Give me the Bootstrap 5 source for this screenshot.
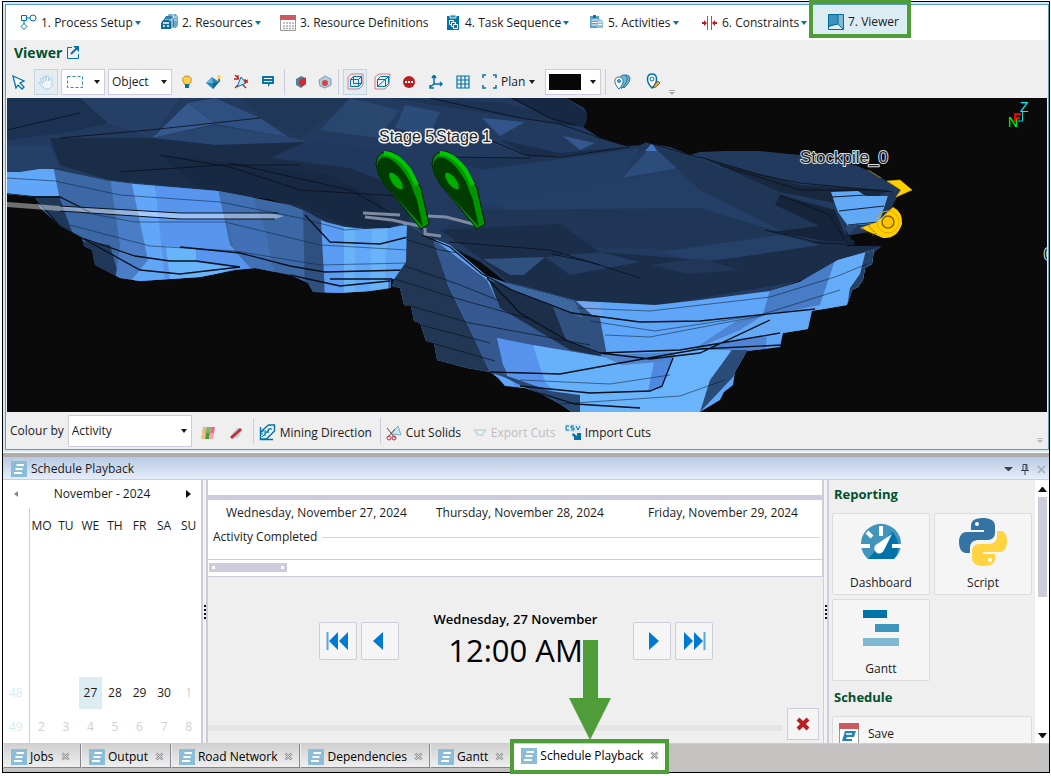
<!DOCTYPE html>
<html lang="en">
<head>
<meta charset="utf-8">
<meta name="viewport" content="width=device-width, initial-scale=1">
<title>Viewer</title>
<link href="https://cdn.jsdelivr.net/npm/bootstrap@5.3.0/dist/css/bootstrap.min.css" rel="stylesheet">
<style>
:root{--line:#cccddc;--blue:#0073a8;--green:#4f9d38;--panel:#efefef}
body{font-family:"Open Sans","Noto Sans",sans-serif;font-size:12px;line-height:16px;color:#1b1b1b;background:#fff}
button,select{font:inherit;color:inherit}
.window{height:100vh;padding:1px 1px 3px 2px}
.frame{border:1px solid #000}
.frame,.viewer-shell,.viewer-pane{min-height:0}
.viewer-shell{border:solid #d5e9f5;border-width:2px 0 2px 2px}
.viewer-pane{border:1px solid #5a9ec0;background:var(--panel)}
.steps{display:grid;grid-template-columns:141px 119px 166px 144px 112px 107px 102px;height:35px;background:#fff;padding-left:14px}
.plain{border:0;background:none;padding:0;display:flex;align-items:center}
.step{gap:4px;white-space:nowrap}
.step .caret{margin-left:-2px}
.step svg{flex:none}
.step.current{background:#dcecf3;padding-left:19px;position:relative;height:33px}
.step.current::after{content:"";position:absolute;inset:-5px 0 0 0;border:4px solid var(--green)}
.caret{width:0;height:0;border:3px solid transparent;border-top:4px solid var(--blue);border-bottom:0;flex:none}
.caret.dark{border-top-color:#1b1b1b}
.pane-title{font-size:14px;font-weight:700;color:#00502d}
.tools{height:33px;padding:0 4px 0 1px;gap:3px}
.tool{width:24px;height:26px;justify-content:center;flex:none}
.tool.pressed{border:1px solid #c6d4e0;background:#e3edf1}
.vsep{width:1px;height:26px;background:var(--line);flex:none;margin:0 1px}
.boxed{border:1px solid var(--line);background:#fff;border-radius:0;height:26px}
.pick{appearance:none;padding:0 20px 0 3px;background:#fff url("data:image/svg+xml,%3Csvg xmlns='http://www.w3.org/2000/svg' width='6' height='4'%3E%3Cpath d='M0 0h6L3 4z' fill='%231b1b1b'/%3E%3C/svg%3E") no-repeat right 4px center}
.scene{flex:1 1 0;min-height:0;background:#0a0a0a;margin:0 1px}
.scene svg{display:block;width:100%;height:100%}
.bottombar{height:37px;padding:0 4px;gap:4px}
.bottombar>button{padding-top:4px}
.splitline{height:5px;background:#acacac;border-top:1px solid #fff}
.dock{height:315px}
.dock-head{height:23px;padding:2px 3px 0 8px;gap:4px;background:linear-gradient(#b7c9e2,#e6eefb);border-bottom:1px solid var(--line)}
.dock-body{flex:1 1 0;min-height:0;border-bottom:1px solid var(--line)}
.calendar-pane{width:199px;background:#fff;border-right:1px solid var(--line)}
.cal-head{height:28px;padding:0 10px}
.cal{width:100%;table-layout:fixed;text-align:center}
.cal th,.cal td{padding:0;height:34px;font-weight:400;vertical-align:middle}
.cal thead th{height:36px}
.cal tbody .blank th,.cal tbody .blank td{height:33px}
.cal th:first-child{width:26px;border-right:1px solid var(--line);color:#d6ecf4}
.cal .other{color:#cfcfd3}
.cal .today span{display:block;background:#dcecf3;padding:8px 0;margin:0 1px}
.grip{width:6px;border:1px solid var(--line);border-width:0 2px 0 1px;background:#f3f3f3;flex:none}
.grip i{display:block;width:2px;height:2px;background:#111;margin:1px 0}
.play-pane{background:var(--panel);min-width:0}
.timeline{background:#fff;border-right:1px solid var(--line);border-bottom:1px solid var(--line)}
.timeline-top{height:20px;border-bottom:5px solid var(--line)}
.dates{display:grid;grid-template-columns:210px 212px 1fr;height:26px;padding-left:18px}
.group-row{height:34px;border-bottom:1px solid var(--line);padding:3px 2px 0 5px;gap:5px}
.group-row hr{margin:8px 0 0;border-color:#d5d5da;opacity:1}
.hscroll{height:16px;padding:3px 0 0 1px}
.hthumb{width:78px;height:9px;background:var(--line);padding:0 3px}
.hthumb i{width:3px;height:3px;background:#fff}
.play{width:38px;height:38px;border:1px solid var(--line);background:#f5f5f5;border-radius:2px;justify-content:center}
.player{padding-top:33px}
.clock{width:226px;text-align:center;color:#000}
.clock-day{font-size:13px;font-weight:600;line-height:18px}
.clock-time{font-size:31px;font-weight:500;line-height:44px}
.track{height:6px;background:#e5e5e5;margin-top:8px}
.side{width:206px;background:var(--panel);padding:5px 3px 0 3px;overflow:hidden}
.side h2{font-size:13px;font-weight:700;line-height:18px;color:#00502d;margin:0 0 0 2px}
.tiles{display:grid;grid-template-columns:1fr 1fr;gap:4px;margin:10px 0 7px}
.tile{height:82px;border:1px solid #dcdcdf;background:#f5f5f5;border-radius:2px;flex-direction:column;justify-content:space-between;padding:4px 0 3px}
.savebtn{width:100%;height:36px;border:1px solid #dcdcdf;background:#f5f5f5;border-radius:2px;margin-top:10px;padding:0 6px;gap:9px}
.vscroll{width:14px;background:#fff;padding:7px 0 5px}
.vthumb{width:9px;height:100px;background:var(--line);margin-top:5px}
.tabs{height:28px;background:#c3c2c0}
.tab{height:24px;min-width:78px;padding:2px 6px 0 7px;gap:3px;background:linear-gradient(#d0d0d0,#efefef);border-right:1px solid #84858f;border-bottom:1px solid #84858f;border-left:1px solid #eee;position:relative;white-space:nowrap;color:#000}
.tab.current{background:#fff;border:0;padding:0 10px 4px;height:27px}
.tab.current::after{content:"";position:absolute;inset:-5px 0 -3px -1px;border:4px solid var(--green)}
.pointer{position:absolute;left:58px;bottom:31px;width:42px;height:100px;z-index:2}
</style>
</head>
<body>
<svg width="0" height="0" class="position-absolute" aria-hidden="true">
  <defs>
    <symbol id="doc" viewBox="0 0 16 16"><path fill="#8bbdd6" d="M0 0h16v16H0z"/><path d="M5.500 4h7.500M4.500 8h7M3 12h8" stroke="#fff" stroke-width="2"/></symbol>
    <symbol id="shut" viewBox="0 0 10 10"><path d="M1.500 1.500l7 7M8.500 1.500l-7 7" stroke="#999" stroke-width="3"/><path d="M1.500 1.500l7 7M8.500 1.500l-7 7" stroke="#ddd"/></symbol>
  </defs>
</svg>
<div class="window d-flex flex-column">
<div class="frame d-flex flex-column flex-grow-1">

<section class="viewer-shell d-flex flex-column flex-grow-1">
<div class="viewer-pane d-flex flex-column flex-grow-1">
  <nav class="steps" aria-label="Workflow">
    <button class="plain step"><svg width="17" height="17" fill="none" stroke="#0073a8"><path d="M1.500 1.500h5v5h-5zM7 4h3M4 7v3M4 9.500l3 3-3 3-3-3z"/><circle cx="13" cy="4" r="3"/></svg>1. Process Setup<span class="caret"></span></button>
    <button class="plain step"><svg width="17" height="17"><path d="M6 3l2-3h7l2 3v8l-2 3H6z" fill="#6ba9c9"/><path d="M7 3h9M8 6h8M12 0v14" stroke="#dcecf3"/><path d="M3 5l2-3h6l2 4v7H3z" fill="#3181aa"/><path d="M4 6h7M11 4v9" stroke="#dcecf3"/><path d="M0 9l2-3h6l2 3v6H0z" fill="#0f6a98"/><path d="M2 9h6M2 12h2M6 12h2" stroke="#fff" stroke-width="1.500"/></svg>2. Resources<span class="caret"></span></button>
    <button class="plain step"><svg width="16" height="16"><path d="M.5.500h15v15H.5z" fill="#fff" stroke="#999"/><path d="M0 0h16v5H0z" fill="#cb5960"/><path d="M3 8h11M3 11h11M3 13.500h11" stroke="#aaa" stroke-width="1.500" stroke-dasharray="2 1"/></svg>3. Resource Definitions</button>
    <button class="plain step"><svg width="15" height="17"><path d="M1 2h12v14H1z" fill="#0073a8"/><path d="M4 1h6v3H4z" fill="#2f86b3" stroke="#dcecf3"/><path d="M3.500 6.500h4v4h-4z" fill="#0073a8" stroke="#fff"/><path d="M5.500 8.500h4v4h-4z" fill="#0073a8" stroke="#fff"/><path d="M7.500 10.500h4v4h-4z" fill="#0073a8" stroke="#fff"/></svg>4. Task Sequence<span class="caret"></span></button>
    <button class="plain step"><svg width="14" height="16"><path d="M0 1h9v12H0z" fill="#5da3c5"/><path d="M3 0h3v3H3z" fill="#176e9c"/><path d="M1.500 5h6M1.500 7.500h6M1.500 10h6" stroke="#fff"/><path d="M7 4h3l3 2v7H7z" fill="#91c0d7"/><path d="M8 7h4M8 9.500h4" stroke="#fff"/></svg>5. Activities<span class="caret"></span></button>
    <button class="plain step"><svg width="16" height="16"><path d="M5.500 1v14M9.500 1v14" stroke="#2582af"/><path d="M0 7h2V5l3 3-3 3V9H0zM15 7h-2V5l-3 3 3 3V9h2z" fill="#b91e22"/></svg>6. Constraints<span class="caret"></span></button>
    <button class="plain step current"><svg width="16" height="16"><path d="M.5.500h15v15H.5z" fill="#83b9d3" stroke="#006a9c"/><path d="M1 1h9v9l-9 3z" fill="#3c92bb"/><path d="M1 13l9-3 5 5H1z" fill="#dcecf3"/><path d="M10 1v9l5 5M1 12l9-2" fill="none" stroke="#006a9c"/></svg>7. Viewer</button>
  </nav>

  <div class="d-flex align-items-center gap-1 px-2" style="height:25px"><span class="pane-title">Viewer</span><svg width="13" height="13" fill="none" stroke="#0073a8"><path d="M6 1.500H1.500v11h11V8"/><path d="M5 8l6-6" stroke-width="2"/><path d="M7 0h6v6z" fill="#0073a8" stroke="none"/></svg></div>

  <div class="tools d-flex align-items-center" role="toolbar" aria-label="View tools">
    <button class="plain tool" aria-label="Select"><svg width="14" height="16"><path d="M1 2l11 5-4 2 4 4-2 2-4-4-2 3z" fill="#fff" stroke="#0073a8" stroke-width="1.300"/></svg></button>
    <button class="plain tool pressed" aria-label="Pan"><svg width="16" height="16"><path d="M2 5l2-1 2 4-1-5 2-1 1 5V2h2l1 5 1-3 2 1v7l-3 3H7L1 9l2-1 2 2z" fill="#edf5f8" stroke="#a9d0e2"/></svg></button>
    <button class="plain boxed px-1 justify-content-between" style="width:44px" aria-label="Selection box"><svg width="18" height="16"><path d="M1.500 2.500h15v11h-15z" fill="none" stroke="#2f86b3" stroke-dasharray="3 2"/></svg><span class="caret dark"></span></button>
    <select class="boxed pick" style="width:64px" aria-label="Pick mode"><option>Object</option></select>
    <button class="plain tool" aria-label="Light"><svg width="12" height="14"><path d="M6 1a4 4 0 0 0-3 7l1 2h4l1-2a4 4 0 0 0-3-7z" fill="#ffcf4d" stroke="#c98c1c"/><path d="M4 9h4v4H4z" fill="#0073a8"/></svg></button>
    <button class="plain tool" aria-label="Plane light"><svg width="18" height="16"><path d="M1 9l6-6 7 5-6 7z" fill="#2686b5"/><path d="M1 9l6-6 1 6z" fill="#65b4d5"/><path d="M8 15l6-7-6 1z" fill="#17648f"/><circle cx="14" cy="3" r="2" fill="#ffcf4d"/><path d="M13 5h2v3h-2z" fill="#666"/></svg></button>
    <button class="plain tool" aria-label="Slice"><svg width="16" height="16"><path d="M4 13L8 3l5 6z" fill="#cfe4ee" stroke="#0073a8"/><path d="M2 1l4 4M15 6l-3 1M2 14l3-3M13 14l-3-3M1 5h4V1M12 5v3h3" stroke="#b91e22" stroke-width="1.300" fill="none"/></svg></button>
    <button class="plain tool" aria-label="Notes"><svg width="12" height="13"><path d="M0 1h12v8H8l-2 3V9H0z" fill="#0a73a5"/><path d="M2 3.500h8M2 6.500h8" stroke="#fff"/></svg></button>
    <span class="vsep"></span>
    <button class="plain tool" aria-label="Solid"><svg width="12" height="13"><path d="M1 4l5-3 5 2v6l-5 4-5-3z" fill="#51819d"/><path d="M5 4l6-1v6l-5 3-2-4z" fill="#d12b31"/></svg></button>
    <button class="plain tool" style="margin:0 -3px" aria-label="Transparent solid"><svg width="14" height="14"><path d="M1 5l6-4 6 3v6l-6 3-5-2z" fill="#b6cedc" stroke="#759fb8"/><circle cx="7" cy="8" r="3" fill="#d4444a"/></svg></button>
    <span class="vsep"></span>
    <button class="plain tool pressed" aria-label="Perspective"><svg width="17" height="17" fill="none"><path d="M1 4l3-3h12v11l-4 4H1V4z" stroke="#d77b80"/><path d="M3.500 6.500h8v7h-8zM6.500 3.500h8v7h-8zM3.500 6.500l3-3M11.500 6.500l3-3M11.500 13.500l3-3" stroke="#0073a8"/></svg></button>
    <button class="plain tool" aria-label="Orthographic"><svg width="17" height="17" fill="none"><path d="M1 4l4-3h11l-1 11-4 4H1z" stroke="#d77b80"/><path d="M3.500 6.500h8v7h-8zM3.500 6.500l3-3h8l-3 3M14.500 3.500v7l-3 3M3.500 13.500l11-10" stroke="#0073a8"/></svg></button>
    <button class="plain tool" aria-label="Stop"><svg width="14" height="14"><circle cx="7" cy="7" r="6" fill="#b91e22"/><path d="M3 7h8" stroke="#fff" stroke-width="2" stroke-dasharray="2 1"/></svg></button>
    <button class="plain tool" aria-label="Axes"><svg width="14" height="14" fill="none" stroke="#0073a8"><path d="M5 1v8l-4 3M5 9h8M3 3l2-3 2 3M11 7l2 2-2 2M1 10v3h4" stroke-width="1.500"/></svg></button>
    <button class="plain tool" aria-label="Grid"><svg width="14" height="14" fill="none" stroke="#0073a8"><path d="M1 1h12v12H1zM5 1v12M9 1v12M1 5h12M1 9h12" stroke-width="1.200"/></svg></button>
    <button class="plain ms-1" style="gap:4px;width:57px"><svg width="15" height="15" fill="none" stroke="#0073a8"><path d="M1 4V1h3M11 1h3v3M14 11v3h-3M4 14H1v-3" stroke-width="1.500"/></svg>Plan<span class="caret dark"></span></button>
    <button class="plain boxed justify-content-between" style="width:56px;padding:0 4px 0 3px;margin-left:3px" aria-label="Background colour"><svg width="32" height="16"><path d="M0 0h32v16H0z" fill="#080808"/></svg><span class="caret dark"></span></button>
    <span class="vsep"></span>
    <button class="plain tool" aria-label="Show markers"><svg width="17" height="16" fill="#79b2cd" stroke="#1678a6"><path d="M10 14C6 10 7 1 12 1s6 6-2 13z"/><path d="M7.500 14.500C4 10 5 1 9.500 1s6 6-2 13.500z"/><path d="M5 15C-1 9 0 3 5 3s6 6 0 12z" fill="#fff"/><circle cx="5" cy="7" r="1.500"/></svg></button>
    <button class="plain tool ms-1" aria-label="Edit markers"><svg width="15" height="17"><path d="M6 15C-1 8 1 1 6 1s7 7 0 14z" fill="#fff" stroke="#0073a8" stroke-width="1.500"/><circle cx="6" cy="6" r="2" fill="none" stroke="#0073a8"/><path d="M7 15l1-3 4-4 2 2-4 4z" fill="#e5a62e" stroke="#333" stroke-width=".6"/></svg></button>
    <svg class="align-self-end" width="8" height="12"><path d="M1 4.500h6" stroke="#aaa"/><path d="M1 6h6L4 9z" fill="#aaa"/></svg>
  </div>

  <div class="scene">
  <svg viewBox="7 98 1040 314" preserveAspectRatio="none" role="img" aria-label="Mine stage model">
    <defs>
      <clipPath id="top"><path d="M7 98H567L584 108 587 113 586 122 583 127 600 138 625 146 640 145 646 142 652 144 670 147 690 155 700 152 725 151 760 151 800 155 855 165 872 172 901 190 893 200 888 212 880 230 846 236 855 242 845 246 882 246 868 258 838 260 820 272 800 281 770 291 730 298 700 302 655 306 575 303 540 297 512 287 480 262 430 238 405 226 365 230 340 228 322 222 300 209 270 199 218 193 110 183 53 172 7 174Z"/></clipPath>
      <clipPath id="west"><path d="M7 172L20 172 40 169 53 169 110 181 135 184 218 191 255 198 290 205 303 210 325 222 345 227 365 229 390 228 402 225 408 223V240L406 262 402 278 391 279V288L370 291 340 293 313 292 308 283 290 275 255 268 235 270 200 277 140 281 120 278 95 265 92 250 84 246 82 238 60 226 40 208 35 197 7 194Z"/></clipPath>
      <clipPath id="south"><path d="M407 223L425 235 450 245 487 276 512 285 575 301 600 302 655 305 700 300 770 291 800 282 838 260 874 250 872 264 865 268 863 280 858 287 852 290 847 305 812 311 808 329 783 333 780 347 747 351 735 372 733 385 724 392 720 400 700 412H572L560 404 540 393 525 388 505 386 498 378 490 372 467 368 437 360 434 343 426 341 420 323 414 321 411 306 404 305 400 288 392 286 395 278 406 262Z"/></clipPath>
    </defs>
    <g clip-path="url(#top)">
      <path d="M7 98H910V310H7Z" fill="#213a5e"/>
      <path d="M7 98H80L108 123 70 132 7 140Z" fill="#1c3252"/>
      <path d="M80 98L180 98 152 138 108 123Z" fill="#253f66"/>
      <path d="M152 138L188 103 215 124Z" fill="#35588d"/><path d="M188 103L215 98 260 118 288 137 215 124Z" fill="#2f4f80"/>
      <path d="M152 138L215 125 288 137 310 142 215 145Z" fill="#284670"/>
      <path d="M50 138L152 138 215 145 310 142 350 168 407 190 410 225 360 230 322 220 290 205 218 191 110 180 60 165Z" fill="#1a2d48"/>
      <path d="M7 145L50 145 60 168 7 172Z" fill="#243f68"/>
      <path d="M310 140L380 150 410 190 350 168 270 158Z" fill="#20385b"/>
      <path d="M160 155L250 165 330 175 380 200 390 228 345 225 300 205 200 188Z" fill="#172842"/>
      <path d="M240 98H350L300 138 260 118Z" fill="#203858"/><path d="M350 98L400 110 378 138 320 130Z" fill="#29466f"/>
      <path d="M390 98L500 102 590 125 583 127 480 112Z" fill="#1d3354"/>
      <path d="M405 105L440 112 430 135 395 128Z" fill="#2b4b79"/><path d="M482 118L525 122 500 136Z" fill="#31548a"/>
      <path d="M510 98H567L587 113 584 127 560 124Z" fill="#172842"/>
      <path d="M563 136L595 143 580 150Z" fill="#34588e"/><path d="M500 140L560 153 625 147 580 158 530 158Z" fill="#1a2e4b"/>
      <path d="M440 157L530 158 650 146 600 170 500 175Z" fill="#1d3455"/>
      <path d="M650 148L622 178 680 168 662 150Z" fill="#2c4c7c"/><path d="M645 151L652 143 657 151Z" fill="#4676be"/>
      <path d="M480 170L640 148 622 178 560 210 480 205Z" fill="#223e66"/>
      <path d="M490 200L620 180 680 168 740 200 790 235 700 250 560 240Z" fill="#243f66"/>
      <path d="M480 210L700 208 790 235 700 250 560 246 440 230Z" fill="#1f3656"/>
      <path d="M655 148L700 160 790 195 850 238 845 246 780 230 700 190Z" fill="#1f3657"/>
      <path d="M700 157L800 185 890 190 870 200 840 204 780 192Z" fill="#18293f"/><path d="M780 195L835 210 845 235 855 245 820 240 770 232 820 226 775 205Z" fill="#15243a"/>
      <path d="M440 230L560 224 600 252 700 260 820 240 880 246 838 260 800 281 655 306 575 300 512 285 480 258Z" fill="#1b2e49"/>
      <path d="M483 259L545 257 524 275 510 275Z" fill="#30507f"/><path d="M545 257L600 252 640 262 570 275Z" fill="#233d63"/>
      <path d="M660 252L780 235 820 245 740 257 700 262Z" fill="#25416a"/><path d="M650 265L700 258 740 270 690 274Z" fill="#203758"/>
      <path d="M485 278L520 285 575 300 574 306 510 290Z" fill="#2b4974"/>
    </g>
    <path d="M7 130L80 113M60 138L150 130 260 118M120 172L220 165 300 165M160 155L230 167 300 190 400 196M230 163L350 190 390 212M430 98L520 118 560 124 600 138 628 146 640 145 646 142 652 144 700 158M512 98L550 118 575 125M490 140L525 155 560 157 630 147M440 157L530 158M700 157L760 175 800 183 893 192M720 165L800 190 870 190M780 195L830 215 845 240M430 236L480 262 512 287M450 242L550 250 600 265M552 254L590 262 640 278M765 230L820 243 882 246" opacity=".8" fill="none" stroke="#0a101b"/>
    <g clip-path="url(#west)">
      <path d="M7 160H410V300H7Z" fill="#3c68a5"/><path d="M7 165H53L59 196H7Z" fill="#60a6f9"/>
      <path d="M34 196L59 196 75 240 110 245 120 280H90L60 226Z" fill="#203857"/>
      <path d="M110 178L132 182 143 230 165 282H115L120 245Z" fill="#4a7dc6"/><path d="M131 180L155 184 170 282H130L148 260Z" fill="#62a6f8"/>
      <path d="M155 183L218 188 230 245 260 272 165 282Z" fill="#5795ef"/><path d="M166 246L196 248V262L235 268 200 280H170Z" fill="#68b4fb"/>
      <path d="M218 188L253 197 265 230 275 275H257L234 250Z" fill="#4270b4"/><path d="M303 208L325 220 330 270 322 295H305Z" fill="#2f507f"/>
      <path d="M321 220H345L348 240 345 295H325Z" fill="#5a9cf3"/><path d="M344 225H391L388 295H344Z" fill="#69b3f8"/><path d="M388 220H410L405 280H385Z" fill="#5fa5f6"/>
      <path d="M355 229H372L370 292H355Z" fill="#61a8f8"/>
      <path d="M7 178L55 181 120 195 220 202 300 218 345 230 408 225M60 208L135 222 225 222 320 245 408 250M70 225L150 246 235 251 320 265 408 263" fill="none" stroke="#10243f" opacity=".55"/>
      <path d="M7 194L35 197 60 197 90 212M36 200L60 226 82 238 135 256 170 261 196 261 240 267M82 238L140 270 180 274 240 267M180 247L240 253 290 266 325 272 408 270M305 215L330 242 380 244 408 237M290 275L340 286 390 281M330 279H392" fill="none" stroke="#08101c" stroke-width="1.300"/>
    </g>
    <path d="M7 202L60 206 180 213H270L284 216 275 219H180L60 211 7 207Z" fill="#fff" opacity=".42"/><path d="M60 206L180 213H278M60 211L180 219H275" fill="none" stroke="#07101d"/>
    <g clip-path="url(#south)">
      <path d="M380 220H900V412H380Z" fill="#60a6f8"/>
      <path d="M407 220L435 238 448 285 465 320 480 345 499 385H390V270Z" fill="#213753"/>
      <path d="M432 238L487 280 500 307 565 345 605 358 540 349 497 338 508 378 490 373 465 320 448 285Z" fill="#34588f"/>
      <path d="M470 260L490 280 555 305 568 341 610 358 570 350 500 308 487 275Z" fill="#1c2e48"/>
      <path d="M540 293L575 300 600 318 607 356 566 340 553 307 520 292Z" fill="#30517f"/>
      <path d="M485 276L575 302 583 318 548 304 512 290Z" fill="#3c679f"/>
      <path d="M575 300L600 303 603 318 592 315Z" fill="#71a7ef"/>
      <path d="M497 338L533 345 543 375 555 395H520L503 365Z" fill="#5793ec"/><path d="M533 345L610 358 700 350 670 412H575L545 382Z" fill="#67b1fa"/>
      <path d="M770 290L800 281 838 258 832 280 820 305 760 317 700 345 735 322 763 314Z" fill="#497cc7"/>
      <path d="M835 260L874 250V268L845 307 818 310 825 290Z" fill="#64abf8"/><path d="M866 250H880V270L858 290 847 307 850 288 860 274Z" fill="#254166"/>
      <path d="M730 325L770 315 765 350 690 352Z" fill="#5084d5"/><path d="M765 314L810 310 807 330 700 347 740 330Z" fill="#63a9f6"/>
      <path d="M670 354L675 350 730 350 700 412H565L575 392 640 392Z" fill="#69b4fb"/>
      <path d="M655 358L675 355 662 388 648 391Z" fill="#4f88df"/><path d="M732 350H748L735 375 700 412 710 380Z" fill="#2b4c78"/>
      <path d="M600 355L680 352 660 362 622 365Z" fill="#5284cc"/>
      <path d="M490 370L550 391 580 395V412H565L530 390Z" fill="#2a4771"/>
      <g fill="none" stroke="#071321"><path d="M402 238L440 250 458 253M405 266L455 283 500 301M395 279L455 298 530 319M407 305L470 323 590 345M413 323L490 343M421 340L495 361" opacity=".65"/><path d="M577 308L650 311 770 297 835 277 867 264M590 321L655 331 760 315 840 290M605 335L650 337 765 315M520 380L610 384 670 375M560 404L680 396 725 380" opacity=".5"/></g>
      <path d="M422 235L450 247 482 274 512 290 572 313 640 322 700 321 815 309M487 278L520 313 568 341 600 353 650 359 700 353 770 320M600 353L680 350 780 333M490 372L560 374 620 363 700 349 783 345M520 386L590 393 650 391 662 386 673 358M530 390L575 404 640 408" fill="none" stroke="#06101d" stroke-width="1.300"/>
    </g>
    <path d="M831 192L858 191 866 196 888 196 879 223 848 226 838 212 835 204Z" fill="#61a9f5"/><path d="M832 197L865 195M839 211L884 206M848 225L879 222" stroke="#102037" fill="none"/>
    <path d="M888 196L901 190 892 207 880 222Z" fill="#1f3658"/><path d="M846 226L860 223 846 237Z" fill="#29476f"/><path d="M846 230L855 245H844Z" fill="#14243b"/>
    <path d="M887 181L900 180 912 190 896 197 901 190ZM868 170L881 178" fill="#ffd000" stroke="#e3b000" stroke-width=".6"/>
    <path d="M860 228L877 222 893 207Q903 212 902 224 897 239 883 238Z" fill="#ffcf00"/><circle cx="888" cy="222" r="11" fill="none" stroke="#e5a900"/><circle cx="888" cy="222" r="6" fill="#ffc400" stroke="#8a6100" stroke-width="1.500"/><path d="M862 228l12 8M867 224l10 11" stroke="#6c4a00" stroke-dasharray="2 1"/>
    <path d="M363 213L400 215M428 216L446 217 477 225M365 217L392 220 424 227M425 228V234L441 236" stroke="#7d8a9f" stroke-width="3" fill="none"/>
    <g id="pin"><path d="M376 164Q377 152 388 151 397 152 410 170L421 188 429 224 421 229 400 203 384 184Q377 174 376 164Z" fill="#009600" stroke="#001a00"/><path d="M377 166Q378 155 388 158 399 162 410 182L417 200 423 227 384 184Q377 174 377 166Z" fill="#003c00"/><ellipse cx="396" cy="181" rx="4" ry="10" transform="rotate(-37 396 181)" fill="#00ae00"/><path d="M384 153Q397 153 410 171L417 185" stroke="#00c800" stroke-width="4" fill="none"/></g>
    <use href="#pin" x="56"/>
    <g font-family="Liberation Sans,Arial,sans-serif" paint-order="stroke" stroke-linejoin="round">
      <g font-size="16" fill="#20242b" stroke="#f2f2f2" stroke-width="3"><text x="379" y="142">Stage 5</text><text x="436" y="142">Stage 1</text></g>
      <g font-size="17" fill="#1c222c" stroke="#dedede" stroke-width="2"><text x="800" y="163">Stockpile_0</text><text x="1044" y="260">0</text></g>
      <text x="1020" y="112" font-size="14" fill="#00f3f3">Z</text><text x="1008" y="127" font-size="14" fill="#00ff00">N</text>
    </g>
    <path d="M1015 122V114H1021M1015 118H1020" stroke="#f00000" stroke-width="2" fill="none"/><path d="M1022.500 112V121H1018" stroke="#00dce0" fill="none"/>
  </svg>
  </div>

  <div class="bottombar d-flex align-items-center">
    <label for="colourBy">Colour by</label>
    <select id="colourBy" class="boxed pick" style="width:124px;height:32px"><option>Activity</option></select>
    <button class="plain tool" aria-label="Legend"><svg width="14" height="12"><path d="M2 0h4L4 6H1z" fill="#f3b47b"/><path d="M6 0h4L9 6H4z" fill="#70bd62"/><path d="M10 0h4l-1 6H9z" fill="#e56b79"/><path d="M1 6h4l-1 6H0z" fill="#eebf8a"/><path d="M5 6h4l-1 6H4z" fill="#469d39"/><path d="M9 6h4l-1 6H8z" fill="#f0a4ae"/></svg></button>
    <button class="plain tool" aria-label="Clear colour"><svg width="14" height="14"><path d="M2 9l6-7 5 1-3 8-7 2z" fill="#bfd2dd"/><path d="M2 12L12 3" stroke="#c92c33" stroke-width="3"/></svg></button>
    <span class="vsep"></span>
    <button class="plain gap-1 text-nowrap" style="width:116px"><svg width="17" height="17" fill="none" stroke="#0073a8"><path d="M1.500 3V15.500H14M1.500 8l8-7h6v6l-8 8h-6z" stroke-width="1.400"/><path d="M3 11V7h4M6 12V8h4M9 9V5h4M3 13l9-9"/></svg>Mining Direction</button>
    <span class="vsep"></span>
    <button class="plain gap-1 text-nowrap" style="width:83px"><svg width="16" height="16"><path d="M5 9l7-8 3 9z" fill="#cfe4ee" stroke="#7ab0ca"/><path d="M1 3l8 10M9 4L2 12" stroke="#555"/><circle cx="3" cy="13" r="2" fill="none" stroke="#c92c33"/><circle cx="8" cy="13" r="2" fill="none" stroke="#c92c33"/></svg>Cut Solids</button>
    <button class="plain gap-1 text-nowrap" style="width:88px;color:#bdbdbf" disabled><svg width="14" height="12"><path d="M0 2h14l-4 7H4z" fill="#cbdbe2"/><path d="M4 4h6l-1 3H6z" fill="#eef4f6"/></svg>Export Cuts</button>
    <button class="plain gap-1 text-nowrap"><svg width="16" height="17"><path d="M0 0h16v8H0z" fill="#d8e9f1"/><path d="M4 2H1v4h3M9 2H6v2h3v2H6M11 2l2 4 2-4" fill="none" stroke="#0073a8"/><path d="M8 9l4 3V9h4v7H9v-3l-2-2z" fill="#0073a8"/></svg>Import Cuts</button>
    <svg class="ms-auto align-self-end mb-1" width="8" height="8"><path d="M1 1.500h6" stroke="#bbb"/><path d="M1 3h6L4 6z" fill="#bbb"/></svg>
  </div>
</div>
</section>

<div class="splitline"></div>

<section class="dock d-flex flex-column">
  <header class="dock-head d-flex align-items-center"><svg width="16" height="16"><use href="#doc"/></svg><span>Schedule Playback</span>
    <button class="plain ms-auto" aria-label="Panel menu"><svg width="9" height="5"><path d="M0 0h9L5 4H4z" fill="#3a4450"/></svg></button>
    <button class="plain ms-1" aria-label="Pin"><svg width="8" height="11" fill="none" stroke="#3a4450"><path d="M2 6V.5h4V6M5 1v5M0 6.500h8M4 7v4"/></svg></button>
    <button class="plain ms-1" aria-label="Close"><svg width="9" height="9"><path d="M1 1l7 7M8 1L1 8" stroke="#a3a9b0" stroke-width="1.500"/></svg></button>
  </header>
  <div class="dock-body d-flex">
    <div class="calendar-pane flex-shrink-0">
      <div class="cal-head d-flex align-items-center justify-content-between">
        <button class="plain" aria-label="Previous month"><svg width="5" height="6"><path d="M5 0v6L1 3z" fill="#888"/></svg></button><span>November - 2024</span><button class="plain" aria-label="Next month"><svg width="5" height="8"><path d="M0 0v8l5-4z" fill="#111"/></svg></button>
      </div>
      <table class="cal">
        <thead><tr><th></th><th>MO</th><th>TU</th><th>WE</th><th>TH</th><th>FR</th><th>SA</th><th>SU</th></tr></thead>
        <tbody>
          <tr class="blank"><th></th><td colspan="7"></td></tr><tr class="blank"><th></th><td colspan="7"></td></tr><tr class="blank"><th></th><td colspan="7"></td></tr><tr class="blank"><th></th><td colspan="7"></td></tr>
          <tr><th>48</th><td></td><td></td><td class="today"><span>27</span></td><td>28</td><td>29</td><td>30</td><td class="other">1</td></tr>
          <tr class="other"><th>49</th><td>2</td><td>3</td><td>4</td><td>5</td><td>6</td><td>7</td><td>8</td></tr>
        </tbody>
      </table>
    </div>
    <div class="grip d-flex flex-column justify-content-center align-items-center"><i></i><i></i><i></i><i></i></div>
    <div class="play-pane flex-grow-1 d-flex flex-column">
      <div class="timeline">
        <div class="timeline-top"></div>
        <div class="dates align-items-center"><span>Wednesday, November 27, 2024</span><span>Thursday, November 28, 2024</span><span>Friday, November 29, 2024</span></div>
        <div class="group-row d-flex"><span>Activity Completed</span><hr class="flex-grow-1"></div>
        <div class="hscroll"><div class="hthumb d-flex align-items-center justify-content-between"><i></i><i></i></div></div>
      </div>
      <div class="player d-flex justify-content-center align-items-center gap-1">
        <button class="plain play" aria-label="First"><svg width="24" height="18"><path d="M1.500 0v18" stroke="#5aa5e0" stroke-width="2"/><path d="M12 0v18L3 9zM22 0v18l-9-9z" fill="#007ad0"/></svg></button>
        <button class="plain play" aria-label="Previous"><svg width="14" height="18"><path d="M10 0v18L0 9z" fill="#007ad0"/></svg></button>
        <div class="clock"><div class="clock-day">Wednesday, 27 November</div><div class="clock-time">12:00 AM</div></div>
        <button class="plain play" aria-label="Next"><svg width="14" height="18"><path d="M4 0v18l10-9z" fill="#007ad0"/></svg></button>
        <button class="plain play" aria-label="Last"><svg width="24" height="18"><path d="M22.500 0v18" stroke="#5aa5e0" stroke-width="2"/><path d="M2 0v18l9-9zM12 0v18l9-9z" fill="#007ad0"/></svg></button>
      </div>
      <div class="mt-auto d-flex align-items-center gap-1 pe-1" style="padding-bottom:3px">
        <div class="track flex-grow-1"></div>
        <button class="plain boxed justify-content-center" style="width:32px;height:32px;background:#f5f5f5" aria-label="Remove"><svg width="14" height="14"><path d="M2 2l10 10M12 2l-10 10" stroke="#b91e22" stroke-width="4"/></svg></button>
      </div>
    </div>
    <div class="grip d-flex flex-column justify-content-center align-items-center"><i></i><i></i><i></i><i></i></div>
    <aside class="side flex-shrink-0">
      <h2>Reporting</h2>
      <div class="tiles">
        <button class="plain tile"><svg width="42" height="48" viewBox="0 0 42 48"><path d="M8 41A20 20 0 1 1 34 41z" fill="#4195bd"/><path d="M8 41L32 14A20 20 0 0 1 34 41z" fill="#0073a8"/><path d="M21 8v10M1 28h9M32 28h9M7 14l5 5" stroke="#fff" stroke-width="4"/><path d="M32 16L17 26a5 5 0 1 0 7 6z" fill="#fff"/></svg>Dashboard</button>
        <button class="plain tile"><svg width="48" height="48" viewBox="0 0 48 48"><path d="M24 0C14 0 12 4 12 8v4h13v2H8C2 14 0 19 0 24s2 11 7 11h4v-5c0-6 4-8 9-8h9c4 0 7-3 7-7V8c0-6-6-8-12-8z" fill="#3673a5"/><path d="M25 48c9 0 11-4 11-8v-4H24v-2h16c6 0 8-5 8-11s-2-10-7-10h-3v5c0 6-4 8-9 8h-9c-4 0-7 3-7 7v7c0 6 6 8 12 8z" fill="#ffd341"/><circle cx="18" cy="6" r="2" fill="#fff"/><circle cx="31" cy="42" r="2" fill="#fff"/></svg>Script</button>
        <button class="plain tile"><svg width="36" height="48"><path d="M0 6h24v8H0z" fill="#0073a8"/><path d="M12 20h24v8H12z" fill="#4195bd"/><path d="M0 34h36v8H0z" fill="#80b7d1"/></svg>Gantt</button>
      </div>
      <h2>Schedule</h2>
      <button class="plain savebtn"><svg width="20" height="22"><path d="M.5.500h19v21H.5z" fill="#fff" stroke="#999"/><path d="M0 0h20v6H0z" fill="#cb5960"/><path d="M6 8h11l-2 6H8l-1 2h6v2H3z" fill="#2584b4"/><path d="M7 11h6" stroke="#fff" stroke-width="1.500"/></svg>Save</button>
    </aside>
    <div class="vscroll d-flex flex-column align-items-center flex-shrink-0">
      <svg width="9" height="5"><path d="M4 0h1l4 5H0z" fill="#111"/></svg><div class="vthumb"></div><svg class="mt-auto" width="9" height="5"><path d="M4 5h1l4-5H0z" fill="#111"/></svg>
    </div>
  </div>
  <nav class="tabs d-flex" aria-label="Panels">
    <button class="plain tab"><svg width="16" height="16"><use href="#doc"/></svg>Jobs<svg class="ms-1" width="9" height="9"><use href="#shut"/></svg></button>
    <button class="plain tab"><svg width="16" height="16"><use href="#doc"/></svg>Output<svg class="ms-1" width="9" height="9"><use href="#shut"/></svg></button>
    <button class="plain tab"><svg width="16" height="16"><use href="#doc"/></svg>Road Network<svg class="ms-1" width="9" height="9"><use href="#shut"/></svg></button>
    <button class="plain tab"><svg width="16" height="16"><use href="#doc"/></svg>Dependencies<svg class="ms-1" width="9" height="9"><use href="#shut"/></svg></button>
    <button class="plain tab"><svg width="16" height="16"><use href="#doc"/></svg>Gantt<svg class="ms-1" width="9" height="9"><use href="#shut"/></svg></button>
    <button class="plain tab current"><svg width="16" height="16"><use href="#doc"/></svg>Schedule Playback<svg class="ms-1" width="9" height="9"><use href="#shut"/></svg><svg class="pointer" viewBox="0 0 42 100"><path d="M14 0h15v58h13L21 100 0 58h14z" fill="#4f9d38"/></svg></button>
  </nav>
</section>
</div>
</div>
<script src="https://cdn.jsdelivr.net/npm/bootstrap@5.3.0/dist/js/bootstrap.bundle.min.js"></script>
</body>
</html>
